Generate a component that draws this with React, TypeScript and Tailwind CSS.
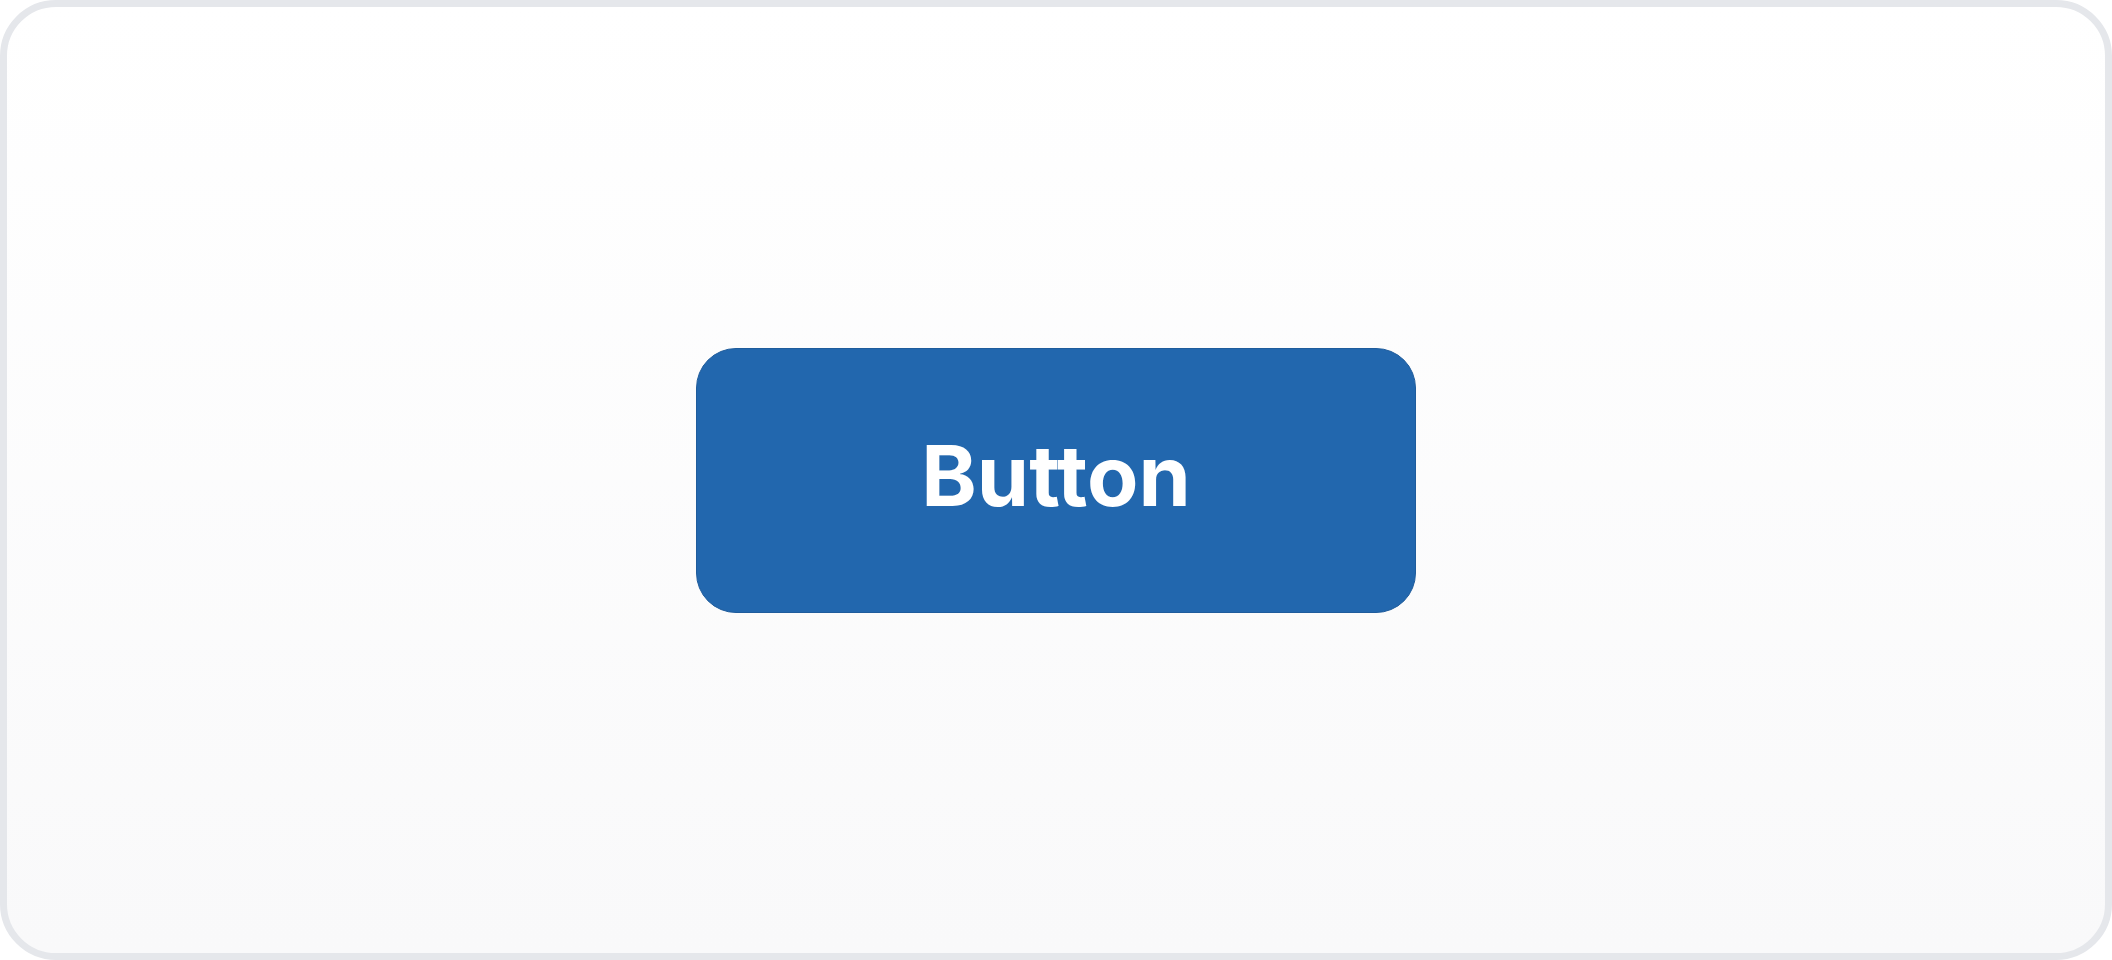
import React from 'react';

const App: React.FC = () => {
  return (
    <div className="h-[960px] w-full bg-white">
      <div className="flex h-full w-full items-center justify-center rounded-[56px] border-[7px] border-[#e5e7eb] bg-gradient-to-b from-white to-[#f9f9fa]">
        <button
          type="button"
          className="flex h-[265px] w-[720px] items-center justify-center rounded-[40px] border border-[#1f5c9c] bg-[#2267ae] pb-[9px] text-[84px] font-bold leading-none text-white"
          style={{ fontFamily: 'Inter, "Noto Sans", sans-serif' }}
        >
          Button
        </button>
      </div>
    </div>
  );
};

export default App;
